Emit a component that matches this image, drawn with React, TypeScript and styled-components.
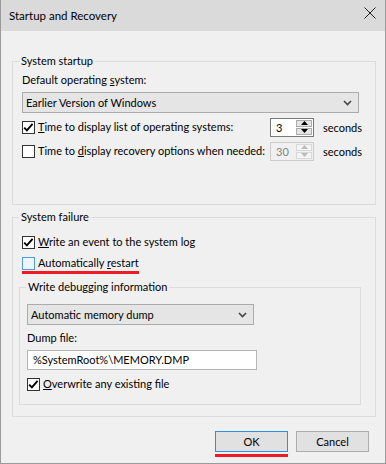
import styled, { createGlobalStyle } from 'styled-components';

const GlobalStyle = createGlobalStyle`
  html, body {
    margin: 0;
    padding: 0;
    background: #ffffff;
  }
  * {
    box-sizing: border-box;
  }
`;

const Window = styled.div`
  width: 386px;
  height: 464px;
  border: 1px solid #9b9b9b;
  border-top: none;
  background: #f0f0f0;
  font-family: Lato, "Noto Sans", sans-serif;
  font-size: 11px;
  color: #000;
  display: flex;
  flex-direction: column;
`;

const TitleBar = styled.div`
  height: 31px;
  background: #dadada;
  display: flex;
  align-items: center;
  justify-content: space-between;
  padding: 0 8px 1px 8px;
  font-size: 11.5px;
`;

const CloseButton = styled.div`
  width: 14px;
  height: 14px;
  display: flex;
  align-items: center;
  justify-content: center;
  margin-top: -4px;
`;

const Body = styled.div`
  flex: 1;
  display: flex;
  flex-direction: column;
  padding: 22px 9px 0 11px;
`;

const Group = styled.fieldset<{ $width: number; $top?: number }>`
  width: ${p => p.$width}px;
  margin: ${p => p.$top ?? 0}px 0 0 0;
  padding: 0;
  border: 1px solid #dcdcdc;
  min-width: 0;
`;

const Legend = styled.legend`
  margin-left: 6px;
  padding: 0 2px;
  line-height: 16px;
`;

const GroupBody = styled.div<{ $pad: string }>`
  padding: ${p => p.$pad};
  display: flex;
  flex-direction: column;
`;

const Label = styled.div<{ $top?: number }>`
  line-height: 16px;
  margin-top: ${p => p.$top ?? 0}px;
`;

const Combo = styled.div<{ $width: number; $top?: number }>`
  width: ${p => p.$width}px;
  height: 21px;
  margin-top: ${p => p.$top ?? 0}px;
  background: #e5e5e5;
  border: 1px solid #acacac;
  display: flex;
  align-items: center;
  justify-content: space-between;
  padding: 0 6px 0 3px;
`;

const TimeRow = styled.div<{ $top?: number }>`
  display: grid;
  grid-template-columns: 239px 44px auto;
  align-items: center;
  column-gap: 9px;
  height: 20px;
  margin-top: ${p => p.$top ?? 0}px;
`;

const CheckRow = styled.label<{ $top?: number; $indent?: number }>`
  display: flex;
  align-items: center;
  gap: 3px;
  height: 16px;
  margin-top: ${p => p.$top ?? 0}px;
  margin-left: ${p => p.$indent ?? 0}px;
  width: fit-content;
  line-height: 16px;
  white-space: nowrap;
`;

const Box = styled.span<{ $hover?: boolean }>`
  width: 13px;
  height: 13px;
  flex: none;
  border: 1px solid ${p => (p.$hover ? '#4d9be0' : '#333333')};
  background: ${p => (p.$hover ? '#eef6fd' : '#ffffff')};
  display: flex;
  align-items: center;
  justify-content: center;
`;

const Marked = styled.div<{ $gap: number; $top?: number; $indent?: number }>`
  display: flex;
  flex-direction: column;
  width: fit-content;
  margin-top: ${p => p.$top ?? 0}px;
  margin-left: ${p => p.$indent ?? 0}px;
  &::after {
    content: '';
    height: 3px;
    margin-top: ${p => p.$gap}px;
    background: #ed1c24;
  }
`;

const Spin = styled.div<{ $disabled?: boolean }>`
  height: 19px;
  display: flex;
  border: 1px solid ${p => (p.$disabled ? '#cccccc' : '#7a7a7a')};
  background: ${p => (p.$disabled ? '#f0f0f0' : '#ffffff')};
  color: ${p => (p.$disabled ? '#838383' : '#000000')};
`;

const SpinValue = styled.div`
  flex: 1;
  padding-left: 5px;
  line-height: 17px;
`;

const SpinArrows = styled.div<{ $disabled?: boolean }>`
  width: 17px;
  display: flex;
  flex-direction: column;
  gap: 1px;
  padding: 1px 1px 1px 0;
  & > span {
    flex: 1;
    display: flex;
    align-items: center;
    justify-content: center;
    background: ${p => (p.$disabled ? '#f4f4f4' : '#e5e5e5')};
    border: 1px solid ${p => (p.$disabled ? '#d9d9d9' : '#acacac')};
  }
`;

const TextInput = styled.div<{ $width: number; $top?: number }>`
  width: ${p => p.$width}px;
  height: 20px;
  margin-top: ${p => p.$top ?? 0}px;
  background: #ffffff;
  border: 1px solid #b5b5b5;
  padding-left: 5px;
  line-height: 18px;
`;

const Buttons = styled.div`
  display: flex;
  justify-content: flex-end;
  align-items: flex-start;
  gap: 8px;
  margin-top: 14px;
  padding-right: 7px;
`;

const Button = styled.div<{ $default?: boolean }>`
  width: 73px;
  height: 21px;
  background: #e1e1e1;
  border: 1px solid ${p => (p.$default ? '#2f8ee6' : '#adadad')};
  display: flex;
  align-items: center;
  justify-content: center;
`;

const Check = () => (
  <svg width="11" height="11" viewBox="0 0 11 11">
    <path d="M1.2 5.6 L3.9 8.4 L9.6 1.8" fill="none" stroke="#000" strokeWidth="1.9" />
  </svg>
);

const Chevron = () => (
  <svg width="9" height="6" viewBox="0 0 9 6">
    <path d="M1 1 L4.5 4.5 L8 1" fill="none" stroke="#444" strokeWidth="1.6" />
  </svg>
);

const Arrow = ({ up, color }: { up?: boolean; color: string }) => (
  <svg width="7" height="4" viewBox="0 0 7 4">
    <path d={up ? 'M0 4 L3.5 0 L7 4 Z' : 'M0 0 L3.5 4 L7 0 Z'} fill={color} />
  </svg>
);

const Spinner = ({ value, disabled }: { value: string; disabled?: boolean }) => {
  const color = disabled ? '#bcbcbc' : '#000';
  return (
    <Spin $disabled={disabled}>
      <SpinValue>{value}</SpinValue>
      <SpinArrows $disabled={disabled}>
        <span><Arrow up color={color} /></span>
        <span><Arrow color={color} /></span>
      </SpinArrows>
    </Spin>
  );
};

export default function App() {
  return (
    <>
      <GlobalStyle />
      <Window>
        <TitleBar>
          <span>Startup and Recovery</span>
          <CloseButton>
            <svg width="12" height="12" viewBox="0 0 12 12">
              <path d="M0.5 0.5 L11.5 11.5 M11.5 0.5 L0.5 11.5" stroke="#222" strokeWidth="1" />
            </svg>
          </CloseButton>
        </TitleBar>
        <Body>
          <Group $width={364}>
            <Legend>System startup</Legend>
            <GroupBody $pad="3px 9px 43px 9px">
              <Label>Default operating <u>s</u>ystem:</Label>
              <Combo $width={337} $top={4}>
                <span>Earlier Version of Windows</span>
                <Chevron />
              </Combo>
              <TimeRow $top={4}>
                <CheckRow>
                  <Box><Check /></Box>
                  <span><u>T</u>ime to display list of operating systems:</span>
                </CheckRow>
                <Spinner value="3" />
                <span>seconds</span>
              </TimeRow>
              <TimeRow $top={4}>
                <CheckRow>
                  <Box />
                  <span>Time to <u>d</u>isplay recovery options when needed:</span>
                </CheckRow>
                <Spinner value="30" disabled />
                <span>seconds</span>
              </TimeRow>
            </GroupBody>
          </Group>

          <Group $width={364} $top={4}>
            <Legend>System failure</Legend>
            <GroupBody $pad="9px 6px 11px 6px">
              <CheckRow $indent={3}>
                <Box><Check /></Box>
                <span><u>W</u>rite an event to the system log</span>
              </CheckRow>
              <Marked $gap={0} $top={5} $indent={3}>
                <CheckRow>
                  <Box $hover />
                  <span>Automatically <u>r</u>estart</span>
                </CheckRow>
              </Marked>
              <Group $width={342} $top={5}>
                <Legend>Write debugging information</Legend>
                <GroupBody $pad="9px 7px 12px 7px">
                  <Combo $width={227}>
                    <span>Automatic memory dump</span>
                    <Chevron />
                  </Combo>
                  <Label $top={5}>Dump file:</Label>
                  <TextInput $width={230} $top={4}>%SystemRoot%\MEMORY.DMP</TextInput>
                  <CheckRow $top={6}>
                    <Box><Check /></Box>
                    <span><u>O</u>verwrite any existing file</span>
                  </CheckRow>
                </GroupBody>
              </Group>
            </GroupBody>
          </Group>

          <Buttons>
            <Marked $gap={2}>
              <Button $default>OK</Button>
            </Marked>
            <Button>Cancel</Button>
          </Buttons>
        </Body>
      </Window>
    </>
  );
}
